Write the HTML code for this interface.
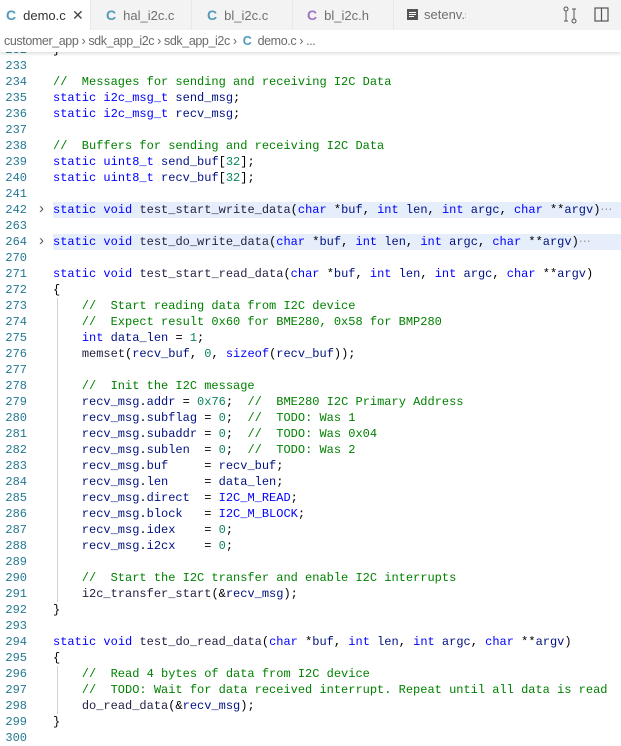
<!DOCTYPE html>
<html><head><meta charset="utf-8"><style>
*{margin:0;padding:0;box-sizing:border-box}
body{width:621px;height:744px;overflow:hidden;background:#fff;font-family:"Liberation Sans",sans-serif;position:relative}
.tabs{position:absolute;top:0;left:0;width:621px;height:30px;background:#f3f3f3}
.tab{position:absolute;top:0;height:30px;font-size:13px;color:#6f6f6f;line-height:30px;border-right:1px solid #e8e8e8}
.tab b{font-weight:bold;color:#519aba;margin-right:7px;font-size:14px}
.crumb{position:absolute;top:30px;left:0;width:621px;height:22px;font-size:12.5px;letter-spacing:-0.4px;color:#6b6b6b;line-height:22px;padding-left:4px;box-shadow:0 2px 3px rgba(0,0,0,.12);background:#fff;z-index:2}
.code{position:absolute;top:42px;left:0;width:621px;font-family:"Liberation Mono",monospace;font-size:12px}
.r{height:16px;line-height:16px;position:relative;white-space:pre}
.n{position:absolute;left:0;width:27px;text-align:right;color:#237893}
.t{position:absolute;left:53px;color:#001080}
.f .bg{position:absolute;left:53px;right:0;top:0;height:16px;background:#e5eefa}
.ch{position:absolute;left:39px;top:-1px;color:#555;font-family:"Liberation Sans";font-size:15px}
.k{color:#0000ff}.s{color:#6a3fcf}.c{color:#008000}.m{color:#098658}.fn{color:#222244}.p{color:#000}
.g{position:absolute;left:57px;width:1px;background:#d3d3d3}
</style></head><body>
<div class="tabs">
<div class="tab" style="left:0;width:91px;background:#fff;color:#333;padding-left:6px"><b>C</b>demo.c<span style="position:absolute;left:72px;color:#444;font-size:14px">✕</span></div>
<div class="tab" style="left:91px;width:101px;padding-left:15px"><b>C</b>hal_i2c.c</div>
<div class="tab" style="left:192px;width:101px;padding-left:15px"><b>C</b>bl_i2c.c</div>
<div class="tab" style="left:293px;width:101px;padding-left:14px"><b style="color:#a074c4">C</b>bl_i2c.h</div>
<div class="tab" style="left:394px;width:72px;padding-left:13px;overflow:hidden;white-space:nowrap;border:none"><svg width="11" height="11" style="vertical-align:-1px;margin-right:6px"><rect x="0" y="0" width="11" height="11" fill="#555"/><rect x="2" y="3" width="7" height="1" fill="#fff"/><rect x="2" y="5" width="7" height="1" fill="#fff"/><rect x="2" y="7" width="5" height="1" fill="#fff"/></svg>setenv.sh</div>
<svg style="position:absolute;left:562px;top:6px" width="16" height="18" fill="none" stroke="#555" stroke-width="1"><circle cx="4" cy="3" r="2"/><circle cx="12" cy="15" r="2"/><path d="M4 5v10M12 13V3M10 3h4M2 15h4"/></svg>
<svg style="position:absolute;left:594px;top:7px" width="16" height="15" fill="none" stroke="#555" stroke-width="1.2"><rect x="1" y="1" width="13" height="13"/><path d="M7.5 1v13"/></svg>
</div>
<div class="crumb">customer_app ›&nbsp;sdk_app_i2c ›&nbsp;sdk_app_i2c ›&nbsp; <b style="color:#519aba">C</b>&nbsp; demo.c › ...</div>
<div class="g" style="top:298px;height:304px"></div>
<div class="g" style="top:666px;height:48px"></div>
<div class="code">
<div class="r"><span class="n">232</span><span class="t p">}</span></div>
<div class="r"><span class="n">233</span></div>
<div class="r"><span class="n">234</span><span class="t c">//  Messages for sending and receiving I2C Data</span></div>
<div class="r"><span class="n">235</span><span class="t"><span class="k">static</span> <span class="k">i2c_msg_t</span> send_msg<span class="p">;</span></span></div>
<div class="r"><span class="n">236</span><span class="t"><span class="k">static</span> <span class="k">i2c_msg_t</span> recv_msg<span class="p">;</span></span></div>
<div class="r"><span class="n">237</span></div>
<div class="r"><span class="n">238</span><span class="t c">//  Buffers for sending and receiving I2C Data</span></div>
<div class="r"><span class="n">239</span><span class="t"><span class="k">static</span> <span class="k">uint8_t</span> send_buf<span class="p">[</span><span class="m">32</span><span class="p">];</span></span></div>
<div class="r"><span class="n">240</span><span class="t"><span class="k">static</span> <span class="k">uint8_t</span> recv_buf<span class="p">[</span><span class="m">32</span><span class="p">];</span></span></div>
<div class="r"><span class="n">241</span></div>
<div class="r f"><div class="bg"></div><span class="n">242</span><span class="ch">›</span><span class="t"><span class="k">static</span> <span class="k">void</span> <span class="fn">test_start_write_data</span><span class="p">(</span><span class="k">char</span> <span class="p">*</span>buf<span class="p">,</span> <span class="k">int</span> len<span class="p">,</span> <span class="k">int</span> argc<span class="p">,</span> <span class="k">char</span> <span class="p">**</span>argv<span class="p">)</span><span style="color:#999">⋯</span></span></div>
<div class="r"><span class="n">263</span></div>
<div class="r f"><div class="bg"></div><span class="n">264</span><span class="ch">›</span><span class="t"><span class="k">static</span> <span class="k">void</span> <span class="fn">test_do_write_data</span><span class="p">(</span><span class="k">char</span> <span class="p">*</span>buf<span class="p">,</span> <span class="k">int</span> len<span class="p">,</span> <span class="k">int</span> argc<span class="p">,</span> <span class="k">char</span> <span class="p">**</span>argv<span class="p">)</span><span style="color:#999">⋯</span></span></div>
<div class="r"><span class="n">270</span></div>
<div class="r"><span class="n">271</span><span class="t"><span class="k">static</span> <span class="k">void</span> <span class="fn">test_start_read_data</span><span class="p">(</span><span class="k">char</span> <span class="p">*</span>buf<span class="p">,</span> <span class="k">int</span> len<span class="p">,</span> <span class="k">int</span> argc<span class="p">,</span> <span class="k">char</span> <span class="p">**</span>argv<span class="p">)</span></span></div>
<div class="r"><span class="n">272</span><span class="t p">{</span></div>
<div class="r"><span class="n">273</span><span class="t c">    //  Start reading data from I2C device</span></div>
<div class="r"><span class="n">274</span><span class="t c">    //  Expect result 0x60 for BME280, 0x58 for BMP280</span></div>
<div class="r"><span class="n">275</span><span class="t">    <span class="k">int</span> data_len <span class="p">=</span> <span class="m">1</span><span class="p">;</span></span></div>
<div class="r"><span class="n">276</span><span class="t">    <span class="fn">memset</span><span class="p">(</span>recv_buf<span class="p">,</span> <span class="m">0</span><span class="p">,</span> <span class="k">sizeof</span><span class="p">(</span>recv_buf<span class="p">));</span></span></div>
<div class="r"><span class="n">277</span></div>
<div class="r"><span class="n">278</span><span class="t c">    //  Init the I2C message</span></div>
<div class="r"><span class="n">279</span><span class="t">    recv_msg<span class="p">.</span>addr <span class="p">=</span> <span class="m">0x76</span><span class="p">;</span>  <span class="c">//  BME280 I2C Primary Address</span></span></div>
<div class="r"><span class="n">280</span><span class="t">    recv_msg<span class="p">.</span>subflag <span class="p">=</span> <span class="m">0</span><span class="p">;</span>  <span class="c">//  TODO: Was 1</span></span></div>
<div class="r"><span class="n">281</span><span class="t">    recv_msg<span class="p">.</span>subaddr <span class="p">=</span> <span class="m">0</span><span class="p">;</span>  <span class="c">//  TODO: Was 0x04</span></span></div>
<div class="r"><span class="n">282</span><span class="t">    recv_msg<span class="p">.</span>sublen  <span class="p">=</span> <span class="m">0</span><span class="p">;</span>  <span class="c">//  TODO: Was 2</span></span></div>
<div class="r"><span class="n">283</span><span class="t">    recv_msg<span class="p">.</span>buf     <span class="p">=</span> recv_buf<span class="p">;</span></span></div>
<div class="r"><span class="n">284</span><span class="t">    recv_msg<span class="p">.</span>len     <span class="p">=</span> data_len<span class="p">;</span></span></div>
<div class="r"><span class="n">285</span><span class="t">    recv_msg<span class="p">.</span>direct  <span class="p">=</span> <span class="k">I2C_M_READ</span><span class="p">;</span></span></div>
<div class="r"><span class="n">286</span><span class="t">    recv_msg<span class="p">.</span>block   <span class="p">=</span> <span class="k">I2C_M_BLOCK</span><span class="p">;</span></span></div>
<div class="r"><span class="n">287</span><span class="t">    recv_msg<span class="p">.</span>idex    <span class="p">=</span> <span class="m">0</span><span class="p">;</span></span></div>
<div class="r"><span class="n">288</span><span class="t">    recv_msg<span class="p">.</span>i2cx    <span class="p">=</span> <span class="m">0</span><span class="p">;</span></span></div>
<div class="r"><span class="n">289</span></div>
<div class="r"><span class="n">290</span><span class="t c">    //  Start the I2C transfer and enable I2C interrupts</span></div>
<div class="r"><span class="n">291</span><span class="t">    <span class="fn">i2c_transfer_start</span><span class="p">(&amp;</span>recv_msg<span class="p">);</span></span></div>
<div class="r"><span class="n">292</span><span class="t p">}</span></div>
<div class="r"><span class="n">293</span></div>
<div class="r"><span class="n">294</span><span class="t"><span class="k">static</span> <span class="k">void</span> <span class="fn">test_do_read_data</span><span class="p">(</span><span class="k">char</span> <span class="p">*</span>buf<span class="p">,</span> <span class="k">int</span> len<span class="p">,</span> <span class="k">int</span> argc<span class="p">,</span> <span class="k">char</span> <span class="p">**</span>argv<span class="p">)</span></span></div>
<div class="r"><span class="n">295</span><span class="t p">{</span></div>
<div class="r"><span class="n">296</span><span class="t c">    //  Read 4 bytes of data from I2C device</span></div>
<div class="r"><span class="n">297</span><span class="t c">    //  TODO: Wait for data received interrupt. Repeat until all data is read</span></div>
<div class="r"><span class="n">298</span><span class="t">    <span class="fn">do_read_data</span><span class="p">(&amp;</span>recv_msg<span class="p">);</span></span></div>
<div class="r"><span class="n">299</span><span class="t p">}</span></div>
<div class="r"><span class="n">300</span></div>
</div>
</body></html>
